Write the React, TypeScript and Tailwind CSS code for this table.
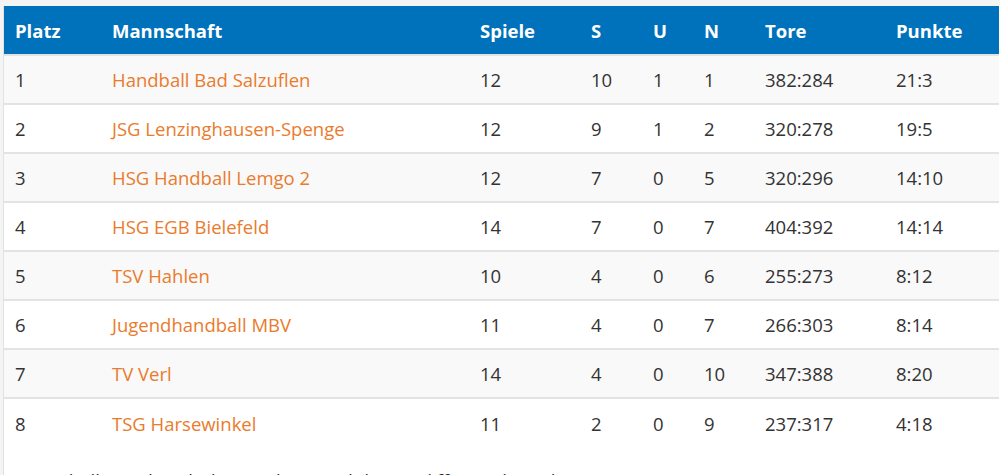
import React from "react";

const rows = [
  ["1", "Handball Bad Salzuflen", "12", "10", "1", "1", "382:284", "21:3"],
  ["2", "JSG Lenzinghausen-Spenge", "12", "9", "1", "2", "320:278", "19:5"],
  ["3", "HSG Handball Lemgo 2", "12", "7", "0", "5", "320:296", "14:10"],
  ["4", "HSG EGB Bielefeld", "14", "7", "0", "7", "404:392", "14:14"],
  ["5", "TSV Hahlen", "10", "4", "0", "6", "255:273", "8:12"],
  ["6", "Jugendhandball MBV", "11", "4", "0", "7", "266:303", "8:14"],
  ["7", "TV Verl", "14", "4", "0", "10", "347:388", "8:20"],
  ["8", "TSG Harsewinkel", "11", "2", "0", "9", "237:317", "4:18"],
];

const headers = ["Platz", "Mannschaft", "Spiele", "S", "U", "N", "Tore", "Punkte"];
const widths = [97, 368, 111, 62, 51, 61, 131, 114];

export default function App() {
  return (
    <div
      className="w-[1000px] h-[475px] overflow-hidden bg-white"
      style={{ fontFamily: '"Open Sans", "Noto Sans", sans-serif' }}
    >
      <div className="h-[6px] bg-[#f4f4f4]" />
      <div className="flex">
        <div className="w-[3px] bg-[#f4f4f4]" />
        <div className="border-l border-[#e2e2e2] w-[996px]">
          <table className="table-fixed border-collapse w-[995px] text-[18.5px] text-[#333]">
            <colgroup>
              {widths.map((w, i) => (
                <col key={i} style={{ width: w }} />
              ))}
            </colgroup>
            <thead>
              <tr className="bg-[#0071bb] h-[49px]">
                {headers.map((h) => (
                  <th key={h} className="text-left font-bold text-white pl-[11px] pr-0 pt-[2px] pb-0 align-middle">
                    {h}
                  </th>
                ))}
              </tr>
            </thead>
            <tbody>
              {rows.map((r, i) => (
                <tr
                  key={i}
                  className={`h-[49px] border-t-2 border-[#e3e3e3] ${i % 2 === 0 ? "bg-[#f9f9f9]" : "bg-white"}`}
                >
                  {r.map((c, j) => (
                    <td
                      key={j}
                      className={`pl-[11px] pr-0 pt-[1px] pb-0 align-middle ${j === 1 ? "text-[#ea7b2c]" : ""}`}
                    >
                      {c}
                    </td>
                  ))}
                </tr>
              ))}
            </tbody>
          </table>
          <p className="mt-[20px] pl-[11px] text-[18.5px] text-[#333]">
            Die Tabelle wird nach den Punkten und der Tordifferenz berechnet.
          </p>
        </div>
      </div>
    </div>
  );
}
